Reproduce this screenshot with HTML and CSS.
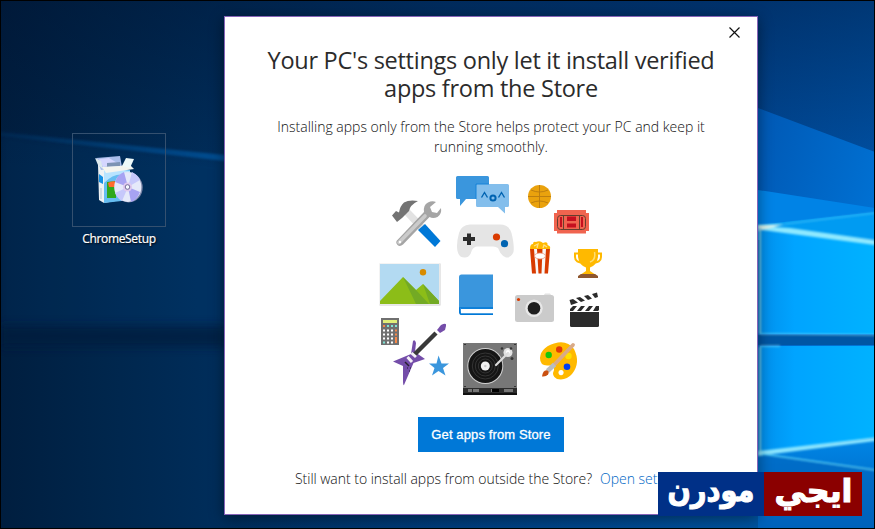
FILE: index.html
```html
<!DOCTYPE html>
<html lang="en">
<head>
    <meta charset="UTF-8">
    <meta name="viewport" content="width=device-width, initial-scale=1.0">
    <title>Get apps from Store</title>
    <link rel="stylesheet" href="styles.css">
</head>
<body>
<div class="desktop">
    <!-- Wallpaper -->
    <svg class="wallpaper" viewBox="0 0 875 529" preserveAspectRatio="none" aria-hidden="true">
        <defs>
            <linearGradient id="base" x1="0" y1="0" x2="1" y2="0">
                <stop offset="0" stop-color="#001e3f"/>
                <stop offset=".12" stop-color="#00264c"/>
                <stop offset=".26" stop-color="#002e5c"/>
                <stop offset=".5" stop-color="#003b78"/>
                <stop offset=".86" stop-color="#004794"/>
                <stop offset="1" stop-color="#0050a2"/>
            </linearGradient>
            <linearGradient id="topShade" x1="0" y1="0" x2="0" y2="1">
                <stop offset="0" stop-color="#001230" stop-opacity=".4"/>
                <stop offset="1" stop-color="#001230" stop-opacity="0"/>
            </linearGradient>
            <linearGradient id="beam" x1="0" y1="0" x2="1" y2="0">
                <stop offset="0" stop-color="#0a5aa8" stop-opacity=".1"/>
                <stop offset="1" stop-color="#0a62b4" stop-opacity=".6"/>
            </linearGradient>
            <linearGradient id="sky" x1="0" y1="0" x2="1" y2="1">
                <stop offset="0" stop-color="#0058b4"/>
                <stop offset="1" stop-color="#0080e6"/>
            </linearGradient>
            <linearGradient id="pane" x1="0" y1="0" x2="1" y2="0">
                <stop offset="0" stop-color="#008fec"/>
                <stop offset=".3" stop-color="#00a4ff"/>
                <stop offset="1" stop-color="#00b2ff"/>
            </linearGradient>
            <linearGradient id="floor" x1="0" y1="0" x2="0" y2="1">
                <stop offset="0" stop-color="#0086e6"/>
                <stop offset="1" stop-color="#005cb4"/>
            </linearGradient>
            <linearGradient id="low" x1="0" y1="0" x2="1" y2="0">
                <stop offset="0" stop-color="#00306a" stop-opacity="0"/>
                <stop offset="1" stop-color="#005fae"/>
            </linearGradient>
            <filter id="soft" x="-10%" y="-50%" width="120%" height="200%"><feGaussianBlur stdDeviation="4"/></filter>
            <filter id="line" x="-10%" y="-50%" width="120%" height="200%"><feGaussianBlur stdDeviation=".8"/></filter>
        </defs>
        <rect width="875" height="529" fill="url(#base)"/>
        <rect width="875" height="170" fill="url(#topShade)"/>
        <path d="M0 134 L225 160 L225 335 L0 328Z" fill="#005cae" opacity=".1" filter="url(#soft)"/>
        <path d="M0 132 L225 155 L225 161 L0 136Z" fill="url(#beam)" filter="url(#line)"/>
        <path d="M0 325H225V347H0Z" fill="#001b3c" opacity=".7" filter="url(#soft)"/>
        <rect y="513" x="220" width="655" height="16" fill="url(#low)"/>
        <!-- right side with the glowing window -->
        <path d="M758 108 L875 152 V529 H758Z" fill="url(#sky)"/>
        <path d="M758 190 L875 208 V240 H758Z" fill="#0083e6"/>
        <path d="M758 225 L875 212 V240 L758 228Z" fill="#009bf2"/>
        <path d="M760 227 L875 243 V334 H760Z" fill="url(#pane)"/>
        <path d="M758 335H875V345H758Z" fill="#0056a4"/>
        <path d="M760 346H875V438L760 453Z" fill="url(#pane)"/>
        <path d="M758 454L875 439V529H758Z" fill="url(#floor)"/>
        <path d="M758 454L875 469V529H758Z" fill="#0065bf" opacity=".65"/>
        <g filter="url(#line)">
            <path d="M759 226 L790 228 L875 240 V245 L762 230Z" fill="#8fe9ff"/>
            <path d="M758 225 L785 224 L758 231Z" fill="#d9f4ee"/>
            <path d="M785 224 L875 213" stroke="#48c5f8" fill="none"/>
            <path d="M760 228V334M760 347V452" stroke="#6fcdec" stroke-width="2" fill="none"/>
            <path d="M760 334H778L875 335M760 346H780" stroke="#7ddcf6" fill="none"/>
            <path d="M758 451 L875 437.5 V441 L758 456Z" fill="#8be6ff"/>
            <path d="M762 454 L875 470" stroke="#55cdf5" stroke-width="1.5" fill="none"/>
        </g>
    </svg>

    <div class="shortcut">
        <div class="shortcut-icon">
            <svg width="54" height="54" viewBox="94 153 54 54" aria-hidden="true">
                <path d="M98 163 L123 166 L127 198 L104 202 L99 199Z" fill="#eef2f4"/>
                <path d="M104 166 L130 169 V199 L104 202Z" fill="#65bdf1"/>
                <path d="M104 182 Q117 169 130 176 V170 L104 166Z" fill="#b8e4ff"/>
                <path d="M107 181 L116 180 V197 L107 197Z" fill="#2fa81c"/>
                <path d="M108 182 Q112 179 117 181 V186 L109 186Z" fill="#ff6b2d"/>
                <path d="M96 157 L120 155 L122 166 L101 169Z" fill="#a9bdea"/>
                <path d="M99 158 L109 157 L119 163 L103 166Z" fill="#d5d6ff"/>
                <path d="M107 162 L120 161 V165 L107 166Z" fill="#7d93b4"/>
                <path d="M95 157 L101 160 L103 168 L98 164Z" fill="#dce9ee"/>
                <path d="M102 166 L119 165 L130 164 L134 168 L106 172Z" fill="#f5f5ef"/>
                <path d="M122 165 L126 157 L134 158 L130 167Z" fill="#eefafa"/>
                <path d="M99 173 L103 176 V183 L99 181Z" fill="#1590e3"/>
                <path d="M101 187V198" stroke="#b4c5d0"/>
                <ellipse cx="128.7" cy="186.5" rx="14" ry="15" fill="#7b86a8"/>
                <ellipse cx="127.800" cy="186" rx="13.600" ry="15" fill="#e5e9fa"/>
                <path d="M128 186 L115 181 Q118 173 124 171Z M128 186 L140 191 Q137 199 131 201Z" fill="#a7a3f2"/>
                <path d="M128 186 L132 171 Q138 174 140 179Z M128 186 L115 192 Q117 197 122 200Z" fill="#c6c8fb"/>
                <circle cx="127.5" cy="186" r="4.5" fill="#e0c9ef"/>
                <circle cx="127.5" cy="186" r="2.3" fill="#f8fbff" stroke="#716d98"/>
            </svg>
        </div>
        <span class="shortcut-name">ChromeSetup</span>
    </div>

    <div class="dialog">
        <button class="close" aria-label="Close">
            <svg width="11" height="11" viewBox="0 0 11 11"><path d="M.5.5l10 10M10.500.5l-10 10" stroke="#111" stroke-width="1.2" fill="none"/></svg>
        </button>
        <h1 class="title">
            <span>Your PC's settings only let it install verified</span>
            <span>apps from the Store</span>
        </h1>
        <p class="text">Installing apps only from the Store helps protect your PC and keep it<br>running smoothly.</p>

        <svg class="art" width="232" height="230" viewBox="375 170 232 230" aria-hidden="true">
            <!-- hammer and wrench -->
            <path d="M404 214 L409 209 L440 241 L434.500 246.500Z" fill="#e2e2e2"/>
            <path d="M425 224 L440.500 241 L435 247 L418 230Z" fill="#0078d7"/>
            <path d="M392 215.500 L396 211 L399 212.500 Q400 206 404 202.500 Q409 199.500 418 201 Q410 205 409 211 L402 218 L397 222 Z" fill="#737373"/>
            <path d="M396.500 241 L424 212 Q423 205 428 202.500 Q432 200.500 436 202 L430 207 L432 212 L437 213 L441 208 Q442 214 437.500 217 Q433 219 429.500 217 L403 244.500 Q400 247 397.500 245 Q395.500 243 396.500 241Z" fill="#a5a5a5"/>
            <path d="M399 242.500 L425 216" stroke="#cbcbcb" stroke-width="3.6" stroke-linecap="round"/>
            <circle cx="400" cy="242" r="1.200" fill="#fff"/>
            <!-- chat bubbles -->
            <path d="M457.500 176 H487.500 Q489 176 489 177.500 V199 H466 L460 206 V199 H457.500 Q456 199 456 197.500 V177.500 Q456 176 457.500 176Z" fill="#3a96dd"/>
            <path d="M477.500 184 H507.500 Q509 184 509 185.500 V205.500 Q509 207 507.500 207 H505 V213.500 L498 207 H477.500 Q476 207 476 205.500 V185.500 Q476 184 477.500 184Z" fill="#83beec"/>
            <path d="M476 199V184H489" fill="none" stroke="#1683d8"/>
            <path d="M481.500 197.500L484.500 192.500L487.500 197.500M498.500 197.500L501.500 192.500L504.500 197.500" fill="none" stroke="#0063b1" stroke-width="1.400"/>
            <circle cx="493" cy="198" r="2.600" fill="none" stroke="#0063b1" stroke-width="2"/>
            <!-- basketball -->
            <circle cx="539.500" cy="196.500" r="11.500" fill="#eaa20d"/>
            <path d="M539.500 185V208M528 196.500H551M531 190Q539.500 194 548 190M531 203Q539.500 199 548 203" fill="none" stroke="#b97a10" stroke-width=".9"/>
            <!-- ticket -->
            <path d="M557 210H586V213H589V231H586V233.500H557V231H554V213H557Z" fill="#f0644f"/>
            <rect x="557.500" y="215.500" width="28" height="14" rx="3" fill="none" stroke="#65402f"/>
            <path d="M563.500 215.500V229.500M579.500 215.500V229.500" stroke="#65402f"/>
            <path d="M560 217H562V227H560ZM581 217H583V227H581ZM567 216.500H576V221H567ZM567 223.500H576V227.500H567Z" fill="#c50f1f"/>
            <!-- gamepad -->
            <path d="M470 224.500H500Q509 224.500 511.500 233Q514.500 245 513.500 252Q511 258 506 257.500Q501 256 498 248Q496 246.500 493 246.500H477Q474 246.500 472 250Q470 257.500 465 257.500Q459 258 457.500 251Q456 244 459 233Q461 225 470 224.500Z" fill="#e5e5e5"/>
            <path d="M467 233.500H471V237H475V241H471V245H467V241H463V237H467Z" fill="#2b2b2b"/>
            <circle cx="496.500" cy="237" r="3.600" fill="#da3b01"/>
            <circle cx="504.500" cy="243.700" r="3.600" fill="#0063b1"/>
            <!-- popcorn -->
            <path d="M530 249H550L548 273.500H532Z" fill="#f7f7f7"/>
            <path d="M530 249H534L536 273.500H532ZM537 249H542.500L541.500 273.500H538.500ZM546 249H550L548 273.500H544.500Z" fill="#d83b01"/>
            <ellipse cx="540" cy="256" rx="5.500" ry="3" fill="#fff" stroke="#e98b72" stroke-width=".7"/>
            <path d="M530 249Q530 244 533 244Q533 241 536 242Q540 240 543 243Q548 241 547.500 245Q551 246 550 249Z" fill="#ffb900"/>
            <path d="M534 246L538 244L537 248M543 248L544 245L547 247" stroke="#ffe188" stroke-width="1.300" fill="none"/>
            <!-- trophy -->
            <path d="M579 253.500H575V257Q575 263 584 262.500M596 253.500H601V257Q601 263 592 262.500" fill="none" stroke="#ffb900" stroke-width="2"/>
            <path d="M578 249H598V257Q597 265 590 267.500V271L596 275H580L586 271V267.500Q579 265 578 257Z" fill="#ffb900"/>
            <path d="M594.500 252Q596 260 590 262" fill="none" stroke="#ffdd72" stroke-width="1.500"/>
            <path d="M581 274H595L598 276V278H578V276Z" fill="#8e562e"/>
            <!-- picture -->
            <rect x="379.500" y="263.500" width="61" height="42" fill="#d0d0d0"/>
            <rect x="379.500" y="263.500" width="60" height="41" fill="#fff"/>
            <rect x="380" y="264" width="59" height="40" fill="#b3daf2"/>
            <path d="M380 304V301L403 277L416 290L423 284L439 301V304Z" fill="#8cbd18"/>
            <path d="M403 277L416 290L429 304H416ZM423 284L439 301V304H430Z" fill="#73aa24"/>
            <circle cx="423" cy="272.200" r="3.200" fill="#d88b00"/>
            <!-- book -->
            <path d="M461.500 274.500H493V314H461.500Q459 314 459 311.500V277Q459 274.500 461.500 274.500Z" fill="#3a96dd"/>
            <path d="M493 307H461Q459 309.500 461 313.500H493V315H461Q459 315 459 311V307.500L460 307Z" fill="#0078d7"/>
            <rect x="461" y="309" width="32" height="4.200" fill="#fff"/>
            <path d="M461 308H493" stroke="#0078d7" stroke-width="1.500"/>
            <!-- camera -->
            <path d="M543 296L545 293.500H550L552 296Z" fill="#e2e2e2"/>
            <rect x="515" y="295" width="39" height="27" rx="2.500" fill="#cbcbcb"/>
            <circle cx="534" cy="308.300" r="8.700" fill="#e7e7e7"/>
            <circle cx="534" cy="308.300" r="6.300" fill="#1f1f1f"/>
            <circle cx="518.500" cy="299.500" r="1.600" fill="#da3b01"/>
            <!-- clapperboard -->
            <path d="M570 312H599V325.500Q599 327 597.500 327H571.500Q570 327 570 325.500Z" fill="#2b2b2b"/>
            <path d="M570 306H599V311H570Z" fill="#fff"/>
            <path d="M573 306H577L573 311H570V309ZM581 306H585L581 311H577ZM589 306H593L589 311H585ZM596 306H599V310L598 311H593Z" fill="#2b2b2b"/>
            <path d="M569.500 300L597 292.500L598 297L571 305Z" fill="#fff"/>
            <path d="M569.500 300L573 299L578 302.500L574 304L571 305ZM576 298L580 297L585 300.500L581 302ZM584 296L588 295L592 298.500L588 300ZM592 294L597 292.500L598 297L595 298Z" fill="#2b2b2b"/>
            <!-- calculator -->
            <rect x="381" y="318" width="18" height="27" fill="#707070"/>
            <rect x="383" y="320" width="14" height="3" fill="#e0ee78"/>
            <path d="M383 330.500h10M383 334.500h10M383 338.500h10M387 342.500h6" stroke="#fff" stroke-width="2" stroke-dasharray="2 2"/>
            <path d="M387 326h10M383 342.500h2" stroke="#7fe2d3" stroke-width="2" stroke-dasharray="2 2"/>
            <path d="M383 326h2M395 330.500h2M395 334.500h2M395 340.500h2" stroke="#f7894a" stroke-width="2"/>
            <path d="M396 337V343" stroke="#f7894a" stroke-width="2"/>
            <!-- guitar -->
            <path d="M413 341Q415 339 416 343L415 352L425 359L413.500 363L404 385Q403 386 403 380V366L393 361.500L411 354Z" fill="#744da9"/>
            <path d="M414 355L436 333" stroke="#393939" stroke-width="4.500"/>
            <path d="M437 330L441 325Q447 322 446 326L445 330L440 333Z" fill="#744da9"/>
            <path d="M411.500 353L416 357M407.500 357L412 362" stroke="#f3eff6" stroke-width="3"/>
            <path d="M405 362L409 366" stroke="#25202c" stroke-width="1.500"/>
            <path d="M407 368h1M410 368h1M409 371h1" stroke="#25202c"/>
            <path d="M438.500 355.500L441.500 363.500H449L443 368L445.500 375.500L438.500 371L432 375.500L434.500 368L429 363.500H436.500Z" fill="#3a96dd"/>
            <!-- turntable -->
            <rect x="463" y="343" width="54" height="46" fill="#777"/>
            <rect x="463" y="388" width="54" height="7" fill="#2c2c2c"/>
            <rect x="463" y="393" width="54" height="2" fill="#111"/>
            <circle cx="485.300" cy="366" r="18" fill="#d0d0d0"/>
            <circle cx="485.300" cy="366" r="17" fill="#151515"/>
            <g fill="none" stroke="#383838" stroke-width=".9"><circle cx="485.300" cy="366" r="13"/><circle cx="485.300" cy="366" r="10"/><circle cx="485.300" cy="366" r="7"/></g>
            <circle cx="485.300" cy="366" r="4.500" fill="#f2f2f2"/><circle cx="485.300" cy="366" r="1.200" fill="#ccc"/>
            <circle cx="508" cy="352.500" r="4.500" fill="#e3e3e3"/><circle cx="508" cy="352" r="2" fill="#fff"/>
            <path d="M508 353L496 365" stroke="#dcdcdc" stroke-width="2.200" stroke-linecap="round"/>
            <g fill="#353535"><circle cx="502" cy="348.500" r="1.300"/><circle cx="511" cy="348.500" r="1.300"/><circle cx="512" cy="358.500" r="1.500"/><path d="M464 344h2v1h-2zM514 344h2v1h-2zM464 386h2v1h-2zM514 386h2v1h-2z"/></g>
            <path d="M468 389H472V392H468ZM473 389H479V392H473ZM504 389H513V392H504ZM491 389H492V392H491Z" fill="#777"/>
            <path d="M492 389H499V392H492Z" fill="#000"/>
            <!-- palette -->
            <path fill-rule="evenodd" d="M558 342.500Q568 341 574 349Q581 363 572 374Q566 381 557 379Q551 376 554 370Q555 365 548 365.500Q540 366 540 358Q541 346 558 342.500ZM561 370A2.600 2.600 0 1 0 561.100 370Z" fill="#ffb900"/>
            <circle cx="548.700" cy="355" r="3.200" fill="#16c60c"/>
            <circle cx="559.200" cy="349.500" r="3.200" fill="#e03a0a"/>
            <circle cx="568.500" cy="356" r="3.200" fill="#ffe000"/>
            <circle cx="567" cy="366.700" r="3.300" fill="#003ff2"/>
            <path d="M553 366L573 345" stroke="#d9aa88" stroke-width="3.800" stroke-linecap="round"/>
            <path d="M547.500 371L554.500 364.500" stroke="#b9bdc0" stroke-width="4.600"/>
            <path d="M542 376.500Q543 370 546.500 370.200Q550 371 548 374.500Q546 377 542 376.500Z" fill="#ca5010"/>
        </svg>

        <button class="store-btn">Get apps from Store</button>
        <p class="more">Still want to install apps from outside the Store?<a class="link" href="#">Open set</a></p>
    </div>

    <!-- Site badge over the corner -->
    <div class="badge" lang="ar">
        <svg class="badge-part red" width="98" height="44" viewBox="0 0 98 44"><text x="49.5" y="30" textLength="78" lengthAdjust="spacingAndGlyphs">ايجي</text></svg>
        <svg class="badge-part blue" width="106" height="44" viewBox="0 0 106 44"><text x="53" y="29" textLength="87" lengthAdjust="spacingAndGlyphs">مودرن</text></svg>
    </div>
</div>
</body>
</html>
```
FILE: styles.css
```css
/* General Styles */
* {
    box-sizing: border-box;
}

body {
    margin: 0;
    font-family: "Open Sans", "Noto Sans", sans-serif;
    overflow: hidden;
}

.desktop {
    position: relative;
    display: flex;
    align-items: flex-start;
    width: 875px;
    height: 529px;
    overflow: hidden;
    background: #002a55;
}

/* thin black frame round everything */
.desktop::after {
    content: "";
    position: absolute;
    inset: 0;
    border: 1px solid #000;
    pointer-events: none;
}

.wallpaper {
    position: absolute;
    inset: 0;
    width: 100%;
    height: 100%;
}

/* Desktop Shortcut */
.shortcut {
    position: relative;
    display: flex;
    flex-direction: column;
    align-items: center;
    width: 94px;
    margin: 133px 58px 0 72px;
    flex-shrink: 0;
}

.shortcut-icon {
    display: flex;
    justify-content: center;
    width: 94px;
    height: 94px;
    padding: 20px 0 0 3px;
    border: 1px solid #34506f;
}

.shortcut-name {
    margin-top: 3px;
    color: #fff;
    font-size: 12px;
    letter-spacing: -0.35px;
    line-height: 17px;
    text-shadow: 1px 1px 2px #000;
    -webkit-text-stroke: 0.2px #fff;
}

/* Dialog */
.dialog {
    position: relative;
    display: flex;
    flex-direction: column;
    align-items: center;
    flex-shrink: 0;
    width: 534px;
    height: 499px;
    margin-top: 16px;
    padding-top: 29px;
    background: #fff;
    border: 1px solid #8764b8;
    box-shadow: 0 3px 14px rgba(0, 0, 0, 0.45);
}

.close {
    position: absolute;
    top: 10px;
    right: 17px;
    display: flex;
    padding: 0;
    border: 0;
    background: none;
}

.title {
    display: flex;
    flex-direction: column;
    align-items: center;
    margin: 0;
    color: #2b2b2b;
    font-size: 23.5px;
    font-weight: 400;
    letter-spacing: -0.27px;
    line-height: 28px;
    white-space: nowrap;
}

.text {
    margin: 15px 0 0;
    color: #111;
    font-size: 14px;
    font-weight: 300;
    line-height: 20px;
    text-align: center;
    white-space: nowrap;
}

.art {
    display: block;
    margin-top: 13px;
    flex-shrink: 0;
}

.store-btn {
    width: 146px;
    height: 35px;
    margin-top: 17px;
    padding: 0;
    border: 0;
    color: #fff;
    background: #0078d7;
    font-family: "Liberation Sans", sans-serif;
    font-size: 13px;
    letter-spacing: 0.12px;
    -webkit-text-stroke: 0.3px #fff;
    flex-shrink: 0;
}

.more {
    display: flex;
    align-self: flex-start;
    gap: 8px;
    margin: 17px 0 0 70px;
    color: #111;
    font-size: 14px;
    font-weight: 300;
    letter-spacing: -0.03px;
    line-height: 20px;
    white-space: nowrap;
}

.link {
    color: #0067c5;
    text-decoration: none;
}

/* Badge */
.badge {
    position: absolute;
    left: 658px;
    top: 472px;
    display: flex;
    flex-direction: row-reverse;
}

.badge-part text {
    fill: #fff;
    stroke: #fff;
    stroke-width: 1.1px;
    font-family: "DejaVu Sans", sans-serif;
    font-size: 32px;
    font-weight: 700;
    text-anchor: middle;
}

.red {
    background: #8b0000;
}

.blue {
    background: #003087;
}
```
